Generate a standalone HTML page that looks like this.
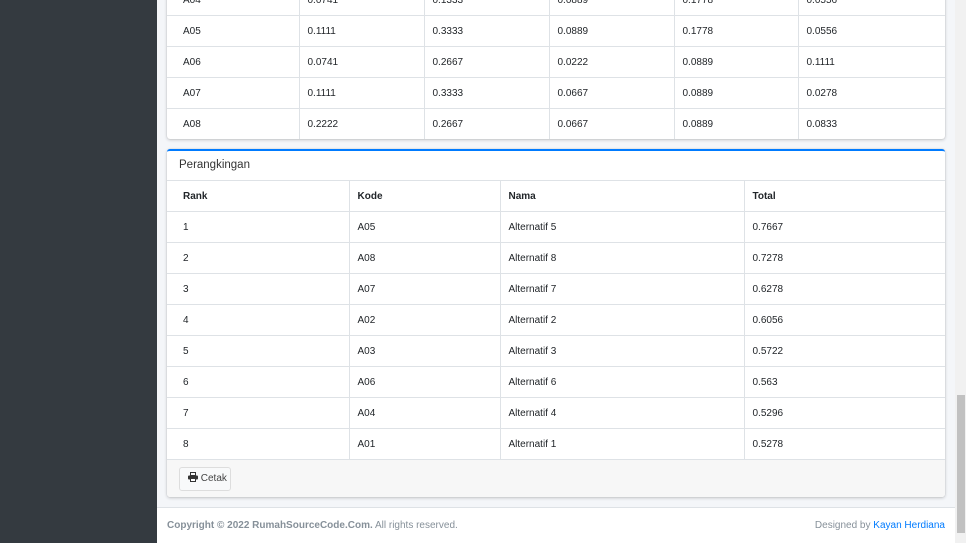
<!DOCTYPE html>
<html><head><meta charset="utf-8"><style>
*{box-sizing:border-box;margin:0;padding:0}
body{width:966px;height:543px;overflow:hidden;background:#f4f6f9;font-family:"Liberation Sans",sans-serif;font-size:10px;color:#212529;position:relative}
.side{position:absolute;left:0;top:0;width:157px;height:543px;background:#343a40}
.sb{position:absolute;left:955px;top:0;width:11px;height:543px;background:#f1f1f1}
.thumb{position:absolute;left:957px;top:395px;width:8px;height:138px;background:#c1c1c1}
.card{position:absolute;left:167px;width:778px;background:#fff;box-shadow:0 0 1px rgba(0,0,0,.2),0 1px 3px rgba(0,0,0,.2);border-radius:3px;overflow:hidden}
table{border-collapse:collapse;width:100%;table-layout:fixed}
td,th{border:1px solid #dee2e6;height:31px;padding:0 0 0 8px;text-align:left;vertical-align:middle;font-size:10px}
tr td:first-child,tr th:first-child{padding-left:16px}
th{font-weight:bold}
tr td:first-child,tr th:first-child{border-left:0}
tr td:last-child,tr th:last-child{border-right:0}
.hdr{height:29px;line-height:29px;padding-left:12px;font-size:11.5px;color:#333}
.ft{height:38px;background:#f7f7f7;position:relative}
.btn{position:absolute;left:12px;top:7px;width:52px;height:24px;border:1px solid #ddd;border-radius:3px;background:#f8f9fa;font-size:10px;line-height:22px;padding-left:8px;color:#444}
.footer{position:absolute;left:157px;top:507px;width:798px;height:36px;background:#fff;border-top:1px solid #dee2e6;font-size:10px;color:#869099}
</style></head><body>
<div class="side"></div>
<div class="card" style="top:-16px;height:155px;border-radius:0 0 3px 3px">
<table>
<colgroup><col style="width:132px"><col style="width:125px"><col style="width:125px"><col style="width:125px"><col style="width:124px"><col></colgroup>
<tr><td>A04</td><td>0.0741</td><td>0.1333</td><td>0.0889</td><td>0.1778</td><td>0.0556</td></tr>
<tr><td>A05</td><td>0.1111</td><td>0.3333</td><td>0.0889</td><td>0.1778</td><td>0.0556</td></tr>
<tr><td>A06</td><td>0.0741</td><td>0.2667</td><td>0.0222</td><td>0.0889</td><td>0.1111</td></tr>
<tr><td>A07</td><td>0.1111</td><td>0.3333</td><td>0.0667</td><td>0.0889</td><td>0.0278</td></tr>
<tr><td style="border-bottom:0">A08</td><td style="border-bottom:0">0.2222</td><td style="border-bottom:0">0.2667</td><td style="border-bottom:0">0.0667</td><td style="border-bottom:0">0.0889</td><td style="border-bottom:0">0.0833</td></tr>
</table></div>
<div class="card" style="top:149px;height:348px;border-top:2px solid #007bff">
<div class="hdr">Perangkingan</div>
<table>
<colgroup><col style="width:182px"><col style="width:151px"><col style="width:244px"><col></colgroup>
<tr><th>Rank</th><th>Kode</th><th>Nama</th><th>Total</th></tr>
<tr><td>1</td><td>A05</td><td>Alternatif 5</td><td>0.7667</td></tr>
<tr><td>2</td><td>A08</td><td>Alternatif 8</td><td>0.7278</td></tr>
<tr><td>3</td><td>A07</td><td>Alternatif 7</td><td>0.6278</td></tr>
<tr><td>4</td><td>A02</td><td>Alternatif 2</td><td>0.6056</td></tr>
<tr><td>5</td><td>A03</td><td>Alternatif 3</td><td>0.5722</td></tr>
<tr><td>6</td><td>A06</td><td>Alternatif 6</td><td>0.563</td></tr>
<tr><td>7</td><td>A04</td><td>Alternatif 4</td><td>0.5296</td></tr>
<tr><td>8</td><td>A01</td><td>Alternatif 1</td><td>0.5278</td></tr>
</table>
<div class="ft"><div class="btn"><svg width="10" height="10" viewBox="0 0 10 10" style="vertical-align:-1px"><rect x="2.5" y="0.5" width="5" height="3" fill="none" stroke="#333"/><rect x="0" y="3.5" width="10" height="4" rx="1" fill="#333"/><rect x="2.5" y="6.5" width="5" height="3" fill="#fff" stroke="#333"/></svg> Cetak</div></div>
</div>
<div class="footer"><div style="position:absolute;left:10px;top:12px"><b>Copyright © 2022 RumahSourceCode.Com.</b> All rights reserved.</div><div style="position:absolute;right:10px;top:12px">Designed by <span style="color:#007bff">Kayan Herdiana</span></div></div>
<div class="sb"></div><div class="thumb"></div>
</body></html>
